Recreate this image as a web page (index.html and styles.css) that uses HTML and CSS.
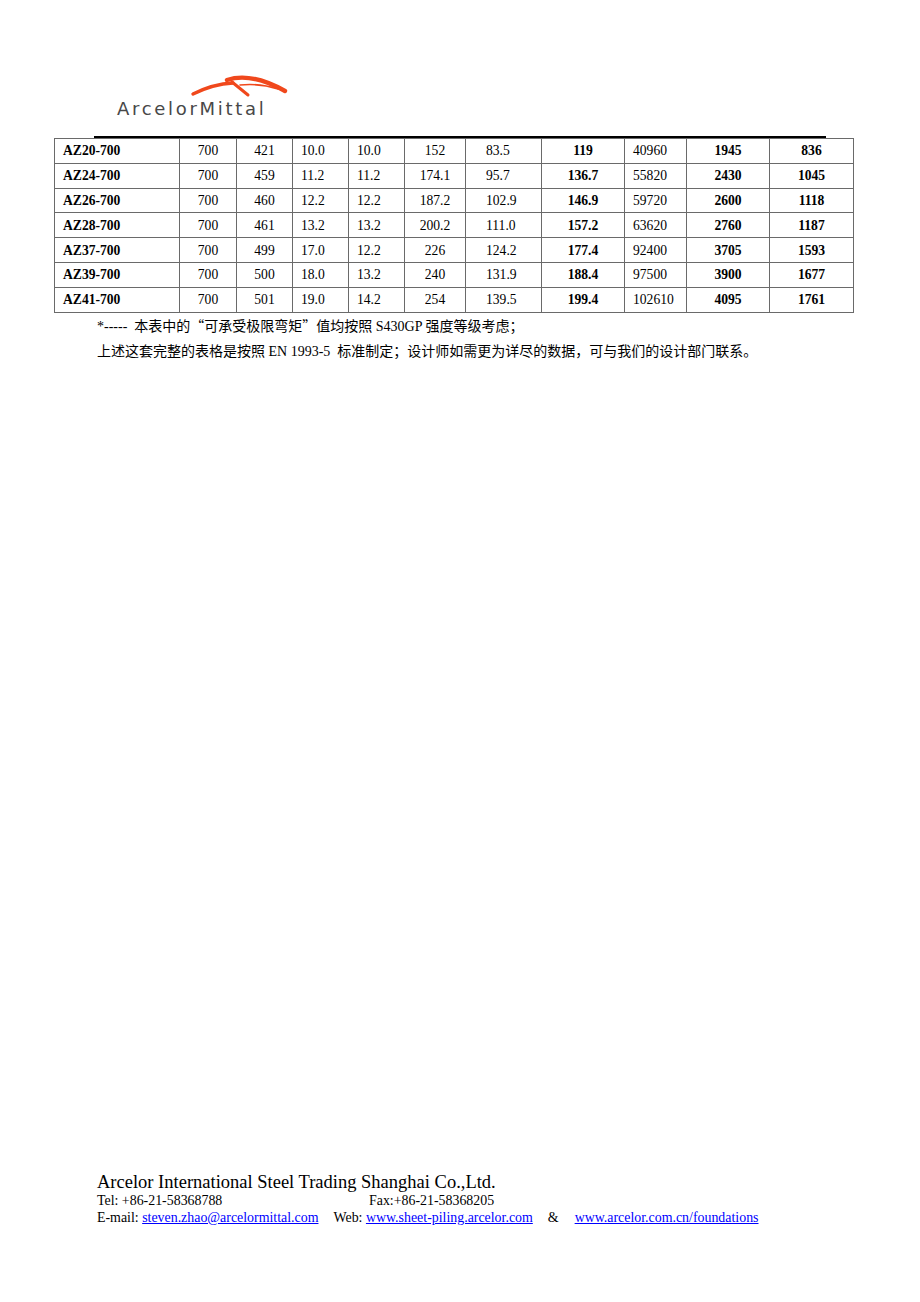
FILE: index.html
```html
<!DOCTYPE html>
<html lang="zh-CN">
<head>
<meta charset="utf-8">
<title>AZ-700 板桩参数</title>
<link rel="stylesheet" href="styles.css">
</head>
<body>
<div class="page">
  <header class="header">
    <svg class="logo" width="190" height="52" viewBox="0 0 190 52" aria-label="ArcelorMittal">
      <path d="M83,24 Q103,14 123,13" fill="none" stroke="#f0481c" stroke-width="3.4" stroke-linecap="round"/>
      <path d="M117,10 Q141,2 175,21" fill="none" stroke="#f0481c" stroke-width="4.4" stroke-linecap="round"/>
      <path d="M122,12 L138,25" fill="none" stroke="#f0481c" stroke-width="3" stroke-linecap="round"/>
      <path d="M130,15 Q150,13 168,19" fill="none" stroke="#f0481c" stroke-width="1.6" stroke-linecap="round"/>
      <text x="7" y="45" class="logo-text">ArcelorMittal</text>
    </svg>
  </header>

  <table class="specs">
    <colgroup>
      <col class="c1"><col class="c2"><col class="c3"><col class="c4"><col class="c5"><col class="c6">
      <col class="c7"><col class="c8"><col class="c9"><col class="c10"><col class="c11">
    </colgroup>
    <tbody>
      <tr><td class="name">AZ20-700</td><td>700</td><td>421</td><td class="l">10.0</td><td class="l">10.0</td><td>152</td><td class="l2">83.5</td><td class="b">119</td><td class="l">40960</td><td class="b">1945</td><td class="b">836</td></tr>
      <tr><td class="name">AZ24-700</td><td>700</td><td>459</td><td class="l">11.2</td><td class="l">11.2</td><td>174.1</td><td class="l2">95.7</td><td class="b">136.7</td><td class="l">55820</td><td class="b">2430</td><td class="b">1045</td></tr>
      <tr><td class="name">AZ26-700</td><td>700</td><td>460</td><td class="l">12.2</td><td class="l">12.2</td><td>187.2</td><td class="l2">102.9</td><td class="b">146.9</td><td class="l">59720</td><td class="b">2600</td><td class="b">1118</td></tr>
      <tr><td class="name">AZ28-700</td><td>700</td><td>461</td><td class="l">13.2</td><td class="l">13.2</td><td>200.2</td><td class="l2">111.0</td><td class="b">157.2</td><td class="l">63620</td><td class="b">2760</td><td class="b">1187</td></tr>
      <tr><td class="name">AZ37-700</td><td>700</td><td>499</td><td class="l">17.0</td><td class="l">12.2</td><td>226</td><td class="l2">124.2</td><td class="b">177.4</td><td class="l">92400</td><td class="b">3705</td><td class="b">1593</td></tr>
      <tr><td class="name">AZ39-700</td><td>700</td><td>500</td><td class="l">18.0</td><td class="l">13.2</td><td>240</td><td class="l2">131.9</td><td class="b">188.4</td><td class="l">97500</td><td class="b">3900</td><td class="b">1677</td></tr>
      <tr><td class="name">AZ41-700</td><td>700</td><td>501</td><td class="l">19.0</td><td class="l">14.2</td><td>254</td><td class="l2">139.5</td><td class="b">199.4</td><td class="l">102610</td><td class="b">4095</td><td class="b">1761</td></tr>
    </tbody>
  </table>

  <div class="notes">
    <p>*-----&nbsp; 本表中的<span class="q">“</span>可承受极限弯矩<span class="q">”</span>值均按照 S430GP 强度等级考虑；</p>
    <p>上述这套完整的表格是按照 EN 1993-5&nbsp; 标准制定；设计师如需更为详尽的数据，可与我们的设计部门联系。</p>
  </div>

  <footer class="footer">
    <div class="company">Arcelor International Steel Trading Shanghai Co.,Ltd.</div>
    <div class="contact"><span class="tel">Tel: +86-21-58368788</span><span>Fax:+86-21-58368205</span></div>
    <div class="contact">E-mail: <a href="#">steven.zhao@arcelormittal.com</a><span class="web">Web:</span> <a href="#">www.sheet-piling.arcelor.com</a><span class="amp">&amp;</span><a class="last" href="#">www.arcelor.com.cn/foundations</a></div>
  </footer>
</div>
</body>
</html>
```

FILE: styles.css
```css
html, body {
  margin: 0;
  padding: 0;
  background: #ffffff;
}

.page {
  width: 920px;
  min-height: 1302px;
  display: flex;
  flex-direction: column;
  font-family: "Liberation Serif", "Noto Sans CJK SC", serif;
  color: #000;
}

.header {
  box-sizing: border-box;
  height: 138px;
  width: 732px;
  margin-left: 94px;
  padding-top: 70px;
  padding-left: 16px;
  border-bottom: 2px solid #000;
}

.logo {
  display: block;
}

.logo-text {
  font-family: "DejaVu Sans", sans-serif;
  font-size: 18px;
  letter-spacing: 2.7px;
  fill: #484848;
}

.specs {
  margin-left: 54px;
  width: 799px;
  border-collapse: collapse;
  table-layout: fixed;
  font-size: 13.6px;
}

.c1 { width: 125px; }
.c2 { width: 57px; }
.c3 { width: 56px; }
.c4 { width: 56px; }
.c5 { width: 56px; }
.c6 { width: 61px; }
.c7 { width: 76px; }
.c8 { width: 83px; }
.c9 { width: 62px; }
.c10 { width: 83px; }
.c11 { width: 84px; }

.specs td {
  border: 1px solid #6a6a6a;
  height: 23.8px;
  padding: 0;
  text-align: center;
  vertical-align: middle;
  line-height: 15px;
  white-space: nowrap;
}

.specs td.name {
  text-align: left;
  padding-left: 8px;
  font-weight: bold;
}

.specs td.l {
  text-align: left;
  padding-left: 8px;
}

.specs td.l2 {
  text-align: left;
  padding-left: 20px;
}

.specs td.b {
  font-weight: bold;
}

.notes {
  margin-left: 97px;
  font-size: 14px;
}

.notes p {
  margin: 0;
  line-height: 25px;
}

.q {
  font-family: "Noto Sans CJK SC", sans-serif;
}

.footer {
  margin-top: auto;
  margin-left: 97px;
  padding-bottom: 76px;
}

.company {
  font-size: 18.5px;
  line-height: 19px;
}

.contact {
  font-size: 13.9px;
  line-height: 17px;
}

.tel {
  display: inline-block;
  width: 272px;
}

.contact a {
  color: #0000ff;
  text-decoration: underline;
}

.web {
  margin-left: 15px;
}

.amp {
  margin-left: 15px;
  margin-right: 16px;
}
```
